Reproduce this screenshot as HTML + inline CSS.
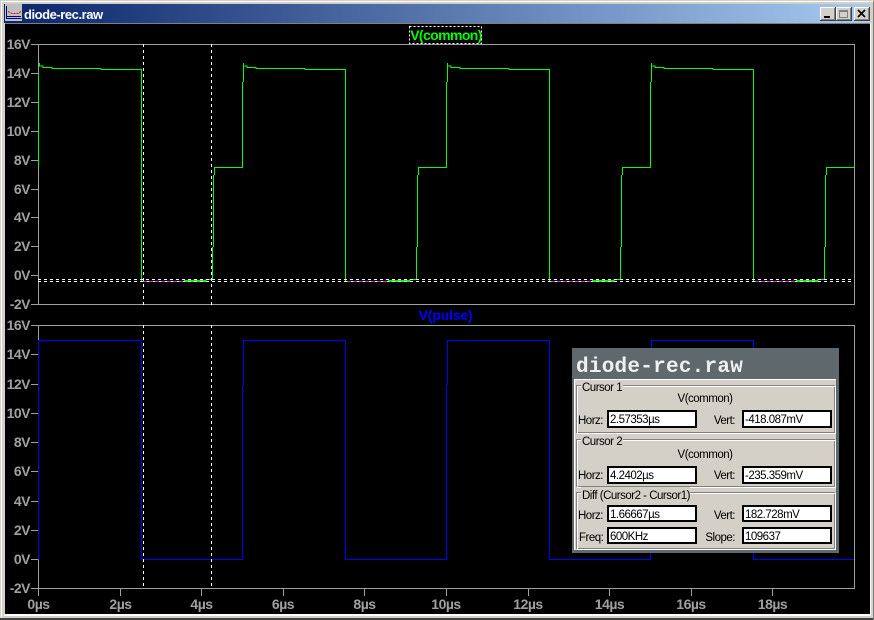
<!DOCTYPE html>
<html><head><meta charset="utf-8"><title>diode-rec.raw</title>
<style>
html,body{margin:0;padding:0;background:#d4d0c8;width:874px;height:620px;overflow:hidden}
svg{display:block}
.lab{font:bold 14px "Liberation Sans",sans-serif;fill:#a0a0a0;letter-spacing:-.5px}
.d{font:11.5px "Liberation Sans",sans-serif;fill:#000;letter-spacing:-.5px}
.ln{shape-rendering:crispEdges;fill:none}
.inp{shape-rendering:crispEdges;fill:#fff;stroke:#000;stroke-width:2}
</style></head><body>
<svg width="874" height="620" viewBox="0 0 874 620" xmlns="http://www.w3.org/2000/svg">
<defs>
<linearGradient id="tg" x1="0" x2="1" y1="0" y2="0"><stop offset="0" stop-color="#0a246a"/><stop offset="1" stop-color="#a6caf0"/></linearGradient>
<clipPath id="c1"><rect x="38" y="44" width="816" height="261"/></clipPath>
<clipPath id="c2"><rect x="38" y="325" width="816" height="264"/></clipPath>
<g id="per">
<path class="ln" stroke="#00ff00" d="M39.5 63V66H43V67.5H52V68.5H101V69.5H141.5V281.5H184M184 280.5H206V279.5H212.5V247M213.5 247V175M214.5 175V167.5H242.5V82M243.5 82V63"/>
<path class="ln" stroke="#00ff00" d="M184 281.5H206"/>
</g>
</defs>
<!-- window frame -->
<rect width="874" height="620" fill="#d4d0c8"/>
<rect x="1" y="1" width="872" height="1" fill="#fff"/>
<rect x="1" y="1" width="1" height="617" fill="#fff"/>
<rect x="0" y="618" width="874" height="2" fill="#404040"/>
<rect x="873" y="1" width="1" height="619" fill="#808080"/>
<!-- title -->
<rect x="4" y="4" width="866" height="19" fill="url(#tg)"/>
<rect x="5" y="4" width="17" height="17" fill="#c0c0c0"/>
<path class="ln" stroke="#e00000" stroke-dasharray="2 1" d="M8 11.5L12 13.5H18L21 11.5"/>
<path class="ln" stroke="#000080" d="M6.5 6V18.5H21.5M7 16.5H21"/>
<text x="24" y="19" style="font:bold 13px 'Liberation Sans',sans-serif;letter-spacing:-.45px" fill="#fff">diode-rec.raw</text>
<!-- title buttons -->
<g>
<rect x="820" y="7" width="16" height="14" fill="#404040"/><rect x="820" y="7" width="15" height="13" fill="#fff"/><rect x="821" y="8" width="14" height="12" fill="#808080"/><rect x="821" y="8" width="13" height="11" fill="#d4d0c8"/>
<rect x="824" y="16" width="6" height="2" fill="#000"/>
<rect x="836" y="7" width="16" height="14" fill="#404040"/><rect x="836" y="7" width="15" height="13" fill="#fff"/><rect x="837" y="8" width="14" height="12" fill="#808080"/><rect x="837" y="8" width="13" height="11" fill="#d4d0c8"/>
<rect x="839.5" y="10.5" width="8" height="7" stroke="#808080" fill="none"/><rect x="839" y="10" width="9" height="2" fill="#808080"/>
<rect x="854" y="7" width="16" height="14" fill="#404040"/><rect x="854" y="7" width="15" height="13" fill="#fff"/><rect x="855" y="8" width="14" height="12" fill="#808080"/><rect x="855" y="8" width="13" height="11" fill="#d4d0c8"/>
</g>
<path d="M858 10L865 17M865 10L858 17" stroke="#000" stroke-width="1.6" fill="none"/>
<!-- plot area -->
<rect x="5" y="24" width="865" height="590" fill="#000"/>
<rect x="5" y="23" width="865" height="1" fill="#808080"/>
<rect x="870" y="23" width="1" height="592" fill="#fff"/>
<rect x="4" y="614" width="867" height="2" fill="#fff"/>
<!-- plot boxes -->
<g class="ln" stroke="#a0a0a0">
<path d="M38.5 44.5H854.5V304.5H38.5Z"/>
<path d="M38.5 325.5H854.5V588.5H38.5Z"/>
<path d="M31 44.5H38M31 73.5H38M31 102.5H38M31 131.5H38M31 160.5H38M31 189.5H38M31 217.5H38M31 246.5H38M31 275.5H38M31 304.5H38"/>
<path d="M31 325.5H38M31 354.5H38M31 384.5H38M31 413.5H38M31 442.5H38M31 471.5H38M31 501.5H38M31 530.5H38M31 559.5H38M31 588.5H38"/>
<path d="M38.5 589V596M120.5 589V596M201.5 589V596M283.5 589V596M364.5 589V596M446.5 589V596M528.5 589V596M609.5 589V596M691.5 589V596M772.5 589V596"/>
</g>
<g class="lab" text-anchor="end">
<text x="30" y="49">16V</text><text x="30" y="78">14V</text><text x="30" y="107">12V</text><text x="30" y="136">10V</text><text x="30" y="165">8V</text><text x="30" y="194">6V</text><text x="30" y="222">4V</text><text x="30" y="251">2V</text><text x="30" y="280">0V</text><text x="30" y="309">-2V</text>
<text x="30" y="330">16V</text><text x="30" y="359">14V</text><text x="30" y="389">12V</text><text x="30" y="418">10V</text><text x="30" y="447">8V</text><text x="30" y="476">6V</text><text x="30" y="506">4V</text><text x="30" y="535">2V</text><text x="30" y="564">0V</text><text x="30" y="593">-2V</text>
</g>
<g class="lab" text-anchor="middle">
<text x="38.5" y="609">0µs</text><text x="120.5" y="609">2µs</text><text x="201.5" y="609">4µs</text><text x="283" y="609">6µs</text><text x="364.5" y="609">8µs</text><text x="446" y="609">10µs</text><text x="528" y="609">12µs</text><text x="609.5" y="609">14µs</text><text x="691" y="609">16µs</text><text x="772.5" y="609">18µs</text>
</g>
<!-- legends -->
<text x="446" y="40" text-anchor="middle" style="font:bold 14px 'Liberation Sans',sans-serif;letter-spacing:-.6px" fill="#00ff00">V(common)</text>
<rect x="409.5" y="26.5" width="72" height="17" fill="none" stroke="#fff" stroke-dasharray="2 2" shape-rendering="crispEdges"/>
<text x="445.5" y="320" text-anchor="middle" style="font:bold 14px 'Liberation Sans',sans-serif;letter-spacing:-.2px" fill="#0000ff">V(pulse)</text>
<!-- traces -->
<g clip-path="url(#c1)">
<path class="ln" stroke="#00ff00" d="M38.5 167V72"/>
<use href="#per"/><use href="#per" x="204"/><use href="#per" x="408"/><use href="#per" x="612"/>
<g class="ln" stroke="#fff" stroke-dasharray="3 3">
<path d="M38 279.5H855M38 281.5H855"/>
<path d="M143.5 44V305M211.5 44V305"/>
</g>
<g class="ln" stroke="#ff00ff" stroke-dasharray="3 3">
<path d="M144 281.5H183M348 281.5H387M552 281.5H591M756 281.5H795"/>
</g>
</g>
<g clip-path="url(#c2)">
<path class="ln" stroke="#0000ff" d="M38.5 559.5V340.5H141.5V559.5H242.5V385M243.5 385V340.5H345.5V559.5H446.5V385M447.5 385V340.5H549.5V559.5H650.5V385M651.5 385V340.5H753.5V559.5H855"/>
<g class="ln" stroke="#fff" stroke-dasharray="3 3"><path d="M143.5 325V589M211.5 325V589"/></g>
</g>
<!-- dialog -->
<rect x="572" y="348" width="267" height="205" fill="#5f686c"/>
<rect x="574" y="379" width="262" height="171" fill="#fff"/>
<rect x="575" y="380" width="261" height="170" fill="#d4d0c8"/>
<text x="576" y="372" style="font:bold 21px 'Liberation Mono',monospace;letter-spacing:.25px" fill="#f0f0f0">diode-rec.raw</text>
<g class="ln">
<rect x="576.5" y="385.5" width="258" height="47" stroke="#808080"/><rect x="577.5" y="386.5" width="258" height="47" stroke="#fff"/>
<rect x="576.5" y="439.5" width="258" height="47" stroke="#808080"/><rect x="577.5" y="440.5" width="258" height="47" stroke="#fff"/>
<rect x="576.5" y="492.5" width="258" height="56" stroke="#808080"/><rect x="577.5" y="493.5" width="258" height="56" stroke="#fff"/>
</g>
<rect x="581" y="380" width="42" height="12" fill="#d4d0c8"/>
<rect x="581" y="434" width="42" height="12" fill="#d4d0c8"/>
<rect x="581" y="487" width="109" height="12" fill="#d4d0c8"/>
<g class="d">
<text x="582" y="391">Cursor 1</text>
<text x="705" y="402" text-anchor="middle">V(common)</text>
<text x="578" y="424">Horz:</text><text x="735" y="424" text-anchor="end">Vert:</text>
<text x="582" y="445">Cursor 2</text>
<text x="705" y="458" text-anchor="middle">V(common)</text>
<text x="578" y="479">Horz:</text><text x="735" y="479" text-anchor="end">Vert:</text>
<text x="582" y="499">Diff (Cursor2 - Cursor1)</text>
<text x="578" y="519">Horz:</text><text x="735" y="519" text-anchor="end">Vert:</text>
<text x="579" y="541">Freq:</text><text x="735" y="541" text-anchor="end">Slope:</text>
</g>
<rect class="inp" x="608" y="411" width="88" height="16"/><rect class="inp" x="743" y="411" width="88" height="16"/>
<rect class="inp" x="608" y="467" width="88" height="16"/><rect class="inp" x="743" y="467" width="88" height="16"/>
<rect class="inp" x="608" y="506" width="88" height="15"/><rect class="inp" x="743" y="506" width="88" height="15"/>
<rect class="inp" x="608" y="528" width="88" height="15"/><rect class="inp" x="743" y="528" width="88" height="15"/>
<g class="d">
<text x="610" y="423">2.57353µs</text><text x="745" y="423">-418.087mV</text>
<text x="610" y="479">4.2402µs</text><text x="745" y="479">-235.359mV</text>
<text x="610" y="518">1.66667µs</text><text x="745" y="518">182.728mV</text>
<text x="610" y="540">600KHz</text><text x="745" y="540">109637</text>
</g>
</svg>
</body></html>
